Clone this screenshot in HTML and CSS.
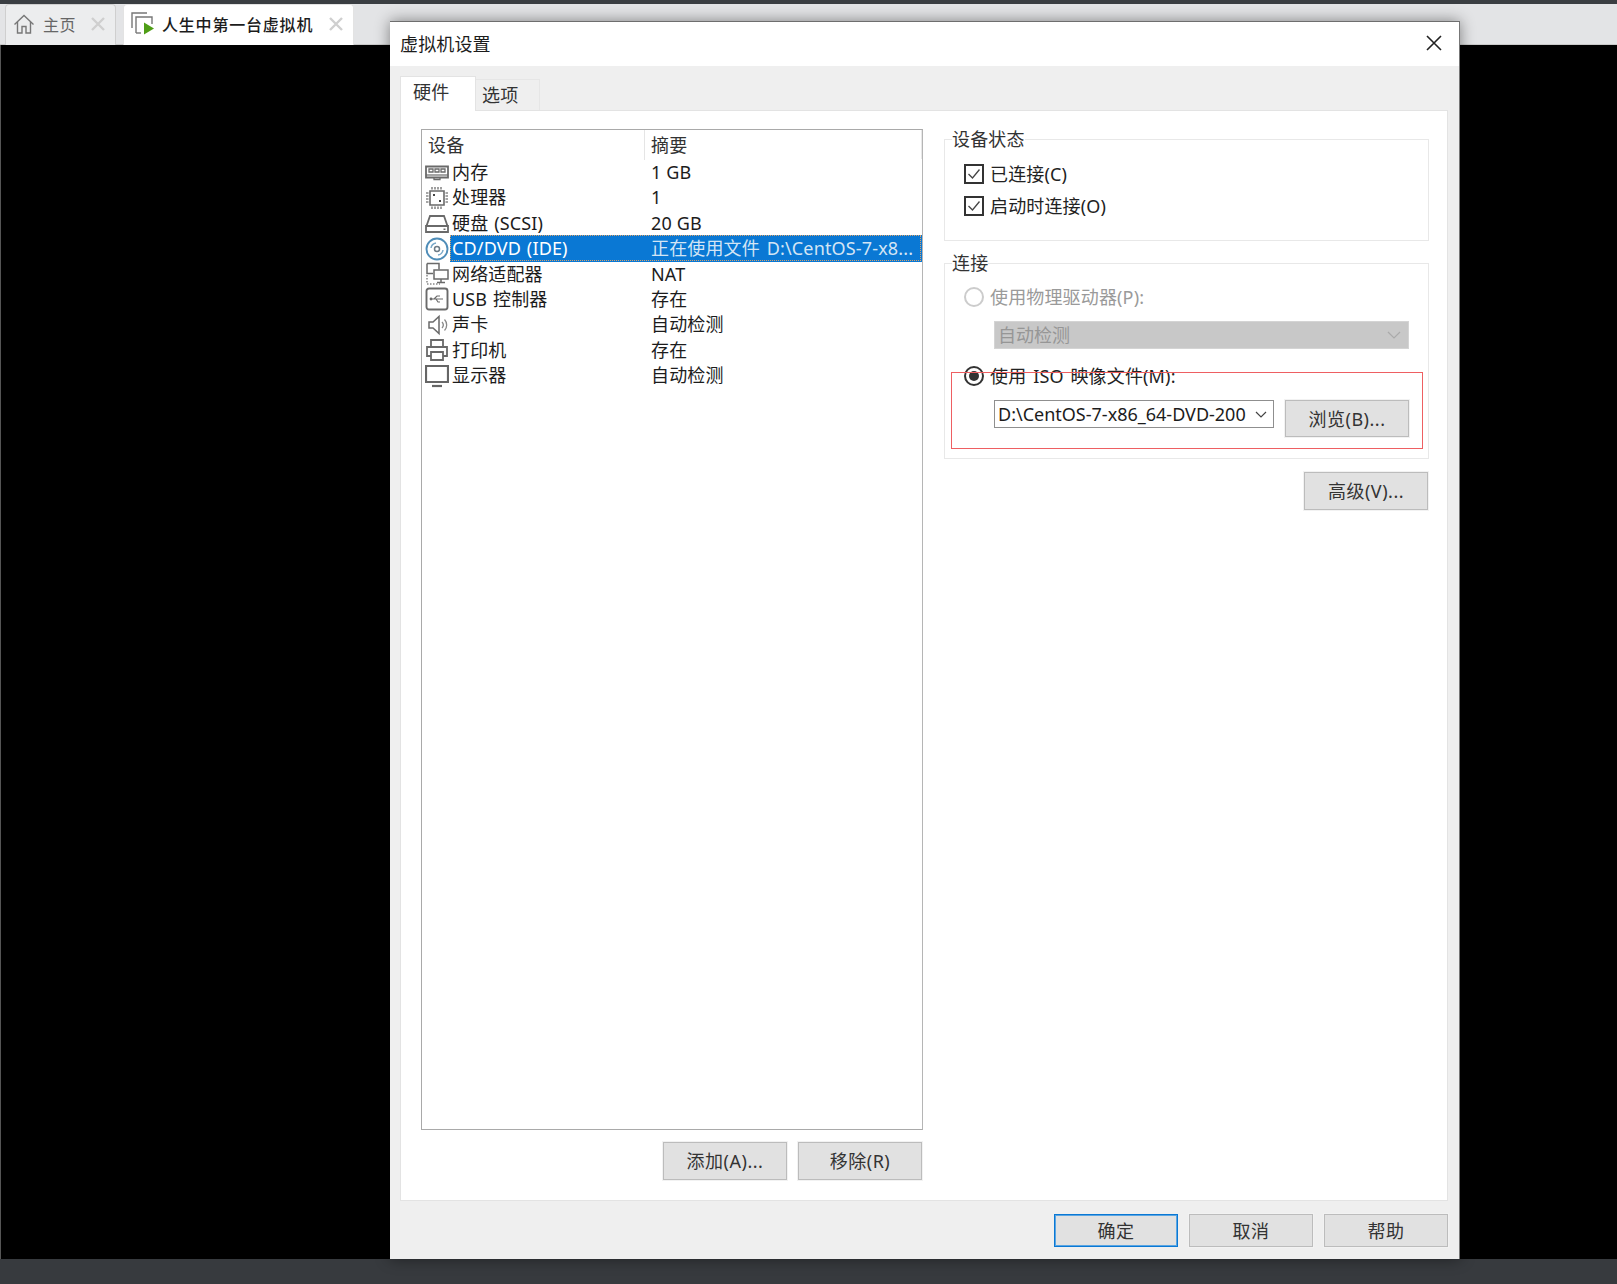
FILE: index.html
```html
<!DOCTYPE html>
<html lang="zh-CN">

<head>
    <meta charset="UTF-8">
    <title>虚拟机设置</title>
    <link rel="stylesheet" href="styles.css">
</head>

<body>
    <div class="app">
        <div class="top-strip"></div>

        <div class="tab-strip">
            <div class="app-tab">
                <svg class="tab-icon" width="22" height="22" viewBox="0 0 22 22" fill="none" stroke="#777" stroke-width="1.4">
                    <path d="M1.5 11.5 11 2.5l9.5 9" />
                    <path d="M4.5 9v11h4.5v-6.5h4V20h4.5V9" />
                </svg>
                <span class="app-tab-label">主页</span>
                <svg class="tab-close" width="14" height="14" viewBox="0 0 14 14" stroke="#cfcfcf" stroke-width="2.4">
                    <path d="M1 1l12 12M13 1 1 13" />
                </svg>
            </div>
            <div class="app-tab active">
                <svg class="tab-icon" width="24" height="24" viewBox="0 0 24 24" fill="none" stroke="#777" stroke-width="1.4">
                    <path d="M1 16V1h15" />
                    <path d="M5 21V5h16v7" />
                    <path d="M5 21h5" />
                    <path d="M13 10.5v12l10-6z" fill="#4f9e16" stroke="none" />
                </svg>
                <span class="app-tab-label">人生中第一台虚拟机</span>
                <svg class="tab-close" width="14" height="14" viewBox="0 0 14 14" stroke="#cfcfcf" stroke-width="2.4">
                    <path d="M1 1l12 12M13 1 1 13" />
                </svg>
            </div>
        </div>

        <div class="viewport"></div>
        <div class="status-strip"></div>
    </div>

    <!-- Settings dialog -->
    <div class="dialog">
        <div class="dialog-title">
            <span>虚拟机设置</span>
            <svg width="16" height="16" viewBox="0 0 16 16" stroke="#222" stroke-width="1.6">
                <path d="M1 1l14 14M15 1 1 15" />
            </svg>
        </div>

        <div class="dialog-body">
            <div class="dialog-tabs">
                <div class="dialog-tab selected">硬件</div>
                <div class="dialog-tab">选项</div>
            </div>

            <div class="panel">
                <div class="left-col">
                    <div class="device-list">
                        <div class="device-head">
                            <div class="head-cell head-name">设备</div>
                            <div class="head-cell">摘要</div>
                        </div>

                        <div class="device-row">
                            <svg class="device-icon" width="24" height="24" viewBox="0 0 24 24" fill="none" stroke="#6a6a6a" stroke-width="1.8">
                                <path d="M1 5.500h22v11H1z" />
                                <path d="M1 14h22" stroke-width="1.200" />
                                <path d="M4 8h4v3H4zM10 8h4v3h-4zM16 8h4v3h-4z" stroke-width="1.300" />
                                <path d="M9 16.500v2h6v-2" stroke-width="1.300" />
                            </svg>
                            <div class="device-name">内存</div>
                            <div class="device-summary">1 GB</div>
                        </div>

                        <div class="device-row">
                            <svg class="device-icon" width="24" height="24" viewBox="0 0 24 24" fill="none" stroke="#6a6a6a" stroke-width="1.600">
                                <path d="M5 5h14v14H5z" />
                                <path d="M7 1v2.500M10 1v2.500M13 1v2.500M16 1v2.500M7 20.500V23M10 20.500V23M13 20.500V23M16 20.500V23M1 7h2.500M1 10h2.500M1 13h2.500M1 16h2.500M20.500 7H23M20.500 10H23M20.500 13H23M20.500 16H23" stroke="#888" />
                                <path d="M8 8h2v2H8zM14 14h2v2h-2z" fill="#444" stroke="none" />
                            </svg>
                            <div class="device-name">处理器</div>
                            <div class="device-summary">1</div>
                        </div>

                        <div class="device-row">
                            <svg class="device-icon" width="24" height="24" viewBox="0 0 24 24" fill="none" stroke="#6a6a6a" stroke-width="1.800">
                                <path d="M1.500 15 5 5h14l3.500 10" />
                                <path d="M1 15h22v6H1z" />
                                <path d="M18.500 17.500h2v1.500h-2z" fill="#6a6a6a" stroke="none" />
                            </svg>
                            <div class="device-name">硬盘 (SCSI)</div>
                            <div class="device-summary">20 GB</div>
                        </div>

                        <div class="device-row current">
                            <svg class="device-icon" width="24" height="24" viewBox="0 0 24 24" fill="none" stroke="#4f8db8" stroke-width="1.900">
                                <circle cx="12" cy="12" r="10.500" />
                                <circle cx="12" cy="12" r="2.500" stroke="#6d7b86" stroke-width="1.500" />
                                <path d="M6 11a6 6 0 0 1 5-5M18 13a6 6 0 0 1-5 5" stroke="#7aa9c9" stroke-width="1.500" />
                            </svg>
                            <div class="device-name">CD/DVD (IDE)</div>
                            <div class="device-summary">正在使用文件 D:\CentOS-7-x8...</div>
                        </div>

                        <div class="device-row">
                            <svg class="device-icon" width="24" height="24" viewBox="0 0 24 24" fill="none" stroke="#6a6a6a" stroke-width="1.500">
                                <path d="M2 1.500h12v6" />
                                <path d="M2 1.500v10H8" />
                                <path d="M2 13v9h13" stroke-dasharray="1.500 1.500" stroke="#888" />
                                <path d="M9 8h14v9H9z" fill="#fff" />
                                <path d="M16 17v3M12 20.500h8" />
                            </svg>
                            <div class="device-name">网络适配器</div>
                            <div class="device-summary">NAT</div>
                        </div>

                        <div class="device-row">
                            <svg class="device-icon" width="24" height="24" viewBox="0 0 24 24" fill="none" stroke="#6a6a6a" stroke-width="1.400">
                                <rect x="1.500" y="1.500" width="21" height="21" rx="2.500" stroke-width="1.900" />
                                <path d="M6 12h12M9 12l3-3h3M11 12l2 3h2" stroke-width="1.200" />
                                <circle cx="6" cy="12" r="1.400" fill="#6a6a6a" stroke="none" />
                            </svg>
                            <div class="device-name">USB 控制器</div>
                            <div class="device-summary">存在</div>
                        </div>

                        <div class="device-row">
                            <svg class="device-icon" width="24" height="24" viewBox="0 0 24 24" fill="none" stroke="#6a6a6a" stroke-width="1.500">
                                <path d="M4 9h4l6-5.500v17L8 15H4z" />
                                <path d="M17 9a4.500 4.500 0 0 1 0 6M19.500 6.500a8 8 0 0 1 0 11" stroke="#888" stroke-width="1.300" />
                            </svg>
                            <div class="device-name">声卡</div>
                            <div class="device-summary">自动检测</div>
                        </div>

                        <div class="device-row">
                            <svg class="device-icon" width="24" height="24" viewBox="0 0 24 24" fill="none" stroke="#6a6a6a" stroke-width="1.800">
                                <path d="M6 9V2h12v7" />
                                <path d="M6 18H2V9h20v9h-4" />
                                <path d="M6 14h12v8H6z" />
                            </svg>
                            <div class="device-name">打印机</div>
                            <div class="device-summary">存在</div>
                        </div>

                        <div class="device-row">
                            <svg class="device-icon" width="24" height="24" viewBox="0 0 24 24" fill="none" stroke="#666" stroke-width="2.200">
                                <path d="M1 2h22v16H1z" />
                                <path d="M7 22h10" />
                            </svg>
                            <div class="device-name">显示器</div>
                            <div class="device-summary">自动检测</div>
                        </div>
                    </div>

                    <div class="button-row list-buttons">
                        <button class="btn">添加(A)...</button>
                        <button class="btn">移除(R)</button>
                    </div>
                </div>

                <div class="right-col">
                    <fieldset class="group state-group">
                        <legend>设备状态</legend>
                        <div class="option">
                            <span class="checkbox">
                                <svg width="16" height="16" viewBox="0 0 16 16" fill="none" stroke="#444" stroke-width="1.300">
                                    <path d="M2.500 8l4 4 7-8.500" />
                                </svg>
                            </span>
                            已连接(C)
                        </div>
                        <div class="option">
                            <span class="checkbox">
                                <svg width="16" height="16" viewBox="0 0 16 16" fill="none" stroke="#444" stroke-width="1.300">
                                    <path d="M2.500 8l4 4 7-8.500" />
                                </svg>
                            </span>
                            启动时连接(O)
                        </div>
                    </fieldset>

                    <fieldset class="group connect-group">
                        <legend>连接</legend>
                        <div class="option disabled">
                            <span class="radio"></span>
                            使用物理驱动器(P):
                        </div>
                        <div class="select select-off">
                            <span>自动检测</span>
                            <svg width="14" height="8" viewBox="0 0 14 8" fill="none" stroke="#aaa" stroke-width="1.200">
                                <path d="M1 1l6 6 6-6" />
                            </svg>
                        </div>

                        <div class="iso-block">
                            <div class="option">
                                <span class="radio on"></span>
                                使用 ISO 映像文件(M):
                            </div>
                            <div class="iso-row">
                                <div class="select">
                                    <span>D:\CentOS-7-x86_64-DVD-200</span>
                                    <svg width="12" height="7" viewBox="0 0 12 7" fill="none" stroke="#444" stroke-width="1.200">
                                        <path d="M1 1l5 5 5-5" />
                                    </svg>
                                </div>
                                <button class="btn">浏览(B)...</button>
                            </div>
                            <div class="red-mark"></div>
                        </div>
                    </fieldset>

                    <div class="button-row advanced-row">
                        <button class="btn">高级(V)...</button>
                    </div>
                </div>
            </div>

            <div class="button-row dialog-buttons">
                <button class="btn primary">确定</button>
                <button class="btn">取消</button>
                <button class="btn">帮助</button>
            </div>
        </div>
    </div>
</body>

</html>
```

FILE: styles.css
```css
/* Global */
* {
    box-sizing: border-box;
}

body {
    margin: 0;
    font-family: "Noto Sans", "Noto Sans CJK SC", sans-serif;
    font-size: 18px;
    letter-spacing: 0.15px;
    word-spacing: 2px;
    color: #1c1c1c;
    overflow: hidden;
}

/* Workstation window behind the dialog */
.app {
    height: 1284px;
    display: flex;
    flex-direction: column;
    background: #000;
}

.top-strip {
    height: 4px;
    background: #3a3e42;
}

.tab-strip {
    height: 41px;
    display: flex;
    gap: 7px;
    padding-left: 5px;
    background: #e3e4e6;
    border-bottom: 1px solid #c9c9c9;
}

.app-tab {
    width: 111px;
    height: 41px;
    display: flex;
    align-items: center;
    padding: 0 10px 2px 7px;
    font-size: 16px;
    letter-spacing: 0.5px;
    color: #666;
    background: #ecedee;
    border: 1px solid #cfcfcf;
    border-bottom: none;
    border-radius: 4px 4px 0 0;
}

.app-tab.active {
    width: 231px;
    color: #1c1c1c;
    background: #fff;
    border-color: #e3e3e3;
}

.app-tab-label {
    flex: 1;
    margin-left: 8px;
    white-space: nowrap;
}

.app-tab.active .app-tab-label {
    margin-left: 7px;
    letter-spacing: 0.8px;
    font-weight: 500;
}

.viewport {
    flex: 1;
    background: #000;
    border-left: 1px solid #555;
}

.status-strip {
    height: 25px;
    background: #373a3e;
}

/* Dialog */
.dialog {
    position: absolute;
    left: 390px;
    top: 21px;
    width: 1070px;
    height: 1238px;
    display: flex;
    flex-direction: column;
    background: #efefef;
    border-top: 1px solid #6e6e6e;
    border-right: 1px solid #777;
    box-shadow: 0 0 14px rgba(0, 0, 0, 0.45);
}

.dialog-title {
    height: 44px;
    flex: none;
    display: flex;
    align-items: center;
    justify-content: space-between;
    padding: 0 17px 2px 10px;
    background: #fff;
}

.dialog-body {
    flex: 1;
    padding: 10px 11px 0 10px;
}

.dialog-tabs {
    height: 34px;
    display: flex;
    align-items: flex-end;
}

.dialog-tab {
    width: 64px;
    height: 31px;
    padding-left: 6px;
    line-height: 30px;
    color: #333;
    background: #efefef;
    border-top: 1px solid #e6e6e6;
    border-right: 1px solid #e6e6e6;
}

.dialog-tab.selected {
    width: 76px;
    height: 35px;
    margin-bottom: -1px;
    padding-left: 12px;
    line-height: 30px;
    background: #fff;
    border: 1px solid #e3e3e3;
    border-bottom: none;
    position: relative;
    z-index: 1;
}

.panel {
    height: 1091px;
    display: grid;
    grid-template-columns: 502px 485px;
    column-gap: 21px;
    padding: 16px 0 0 20px;
    background: #fff;
    border: 1px solid #e3e3e3;
}

/* Device list */
.left-col {
    padding-top: 2px;
}

.device-list {
    height: 1001px;
    border: 1px solid #a9a9a9;
    border-right-color: #b5b5b5;
}

.device-head {
    height: 29px;
    display: grid;
    grid-template-columns: 223px 1fr;
    border-right: 1px solid #e8e8e8;
}

.head-cell {
    padding-left: 6px;
    line-height: 30px;
    color: #333;
}

.head-name {
    border-right: 1px solid #e5e5e5;
}

.device-row {
    position: relative;
    height: 25.4px;
    display: grid;
    grid-template-columns: 28px 195px 1fr;
    align-items: center;
    line-height: 27px;
    white-space: nowrap;
}

.device-icon {
    justify-self: end;
    margin-right: 1px;
}

.device-name {
    padding-left: 2px;
    height: 100%;
    word-spacing: 1px;
}

.device-summary {
    padding-left: 6px;
    height: 100%;
    word-spacing: 0;
}

.device-row.current .device-name,
.device-row.current .device-summary {
    color: #fff;
    background: #0a78d4;
}

.device-row.current .device-summary {
    color: #d3e5f5;
    word-spacing: 2px;
}

.device-row.current::after {
    content: "";
    position: absolute;
    left: 28px;
    top: 0;
    right: 1px;
    bottom: 0;
    border: 1px dotted #d9a36b;
}

/* Right column groups */
.group {
    margin: 0;
    padding: 0 19px;
    border: 1px solid #e8e8e8;
    min-width: 0;
}

.group legend {
    padding: 0;
    margin-left: -12px;
    line-height: 24px;
    color: #333;
}

.state-group {
    padding-top: 13px;
    padding-bottom: 24px;
}

.connect-group {
    margin-top: 10px;
    padding-top: 12px;
    padding-bottom: 21px;
}

.option {
    height: 20px;
    display: flex;
    align-items: center;
    gap: 6px;
    line-height: 20px;
    color: #222;
}

.state-group .option + .option {
    margin-top: 12px;
}

.option.disabled {
    color: #9a9a9a;
}

.checkbox {
    width: 20px;
    height: 20px;
    display: flex;
    align-items: center;
    justify-content: center;
    border: 2px solid #333;
}

.radio {
    width: 20px;
    height: 20px;
    display: flex;
    align-items: center;
    justify-content: center;
    border: 2px solid #333;
    border-radius: 50%;
}

.radio.on::after {
    content: "";
    width: 10px;
    height: 10px;
    border-radius: 50%;
    background: #333;
}

.option.disabled .radio {
    border-color: #ccc;
}

.select {
    height: 28px;
    display: flex;
    align-items: center;
    justify-content: space-between;
    padding: 0 6px 0 3px;
    line-height: 26px;
    white-space: nowrap;
    letter-spacing: 0;
    border: 1px solid #8f8f8f;
    background: #fff;
}

.select-off {
    margin: 14px 0 0 30px;
    padding: 0 7px 0 3px;
    color: #969696;
    background: #c8c8c8;
    border-color: #d4d4d4;
}

.iso-block {
    position: relative;
    margin-top: 17px;
}

.iso-row {
    display: flex;
    gap: 11px;
    margin: 14px 0 0 30px;
}

.iso-row .select {
    width: 280px;
}

.iso-row .btn {
    height: 37px;
}

.red-mark {
    position: absolute;
    left: -13px;
    top: 6px;
    width: 472px;
    height: 77px;
    border: 1px solid #ee5f62;
    pointer-events: none;
}

/* Buttons */
.button-row {
    display: flex;
    justify-content: flex-end;
}

.btn {
    width: 124px;
    height: 38px;
    padding: 0 0 2px;
    font: inherit;
    letter-spacing: 0.5px;
    color: #333;
    background: #e1e1e1;
    border: 1px solid #bcbcbc;
    box-shadow: 0 0 0 1px #f2f2f2;
}

.btn.primary {
    border: 1px solid #0a78d4;
    box-shadow: inset 0 0 0 1px #5aa5e2;
}

.list-buttons {
    gap: 11px;
    margin: 12px 1px 0 0;
}

.advanced-row {
    margin: 13px 1px 0 0;
}

.dialog-buttons {
    gap: 11px;
    margin-top: 13px;
}

.dialog-buttons .btn {
    height: 33px;
}
```
